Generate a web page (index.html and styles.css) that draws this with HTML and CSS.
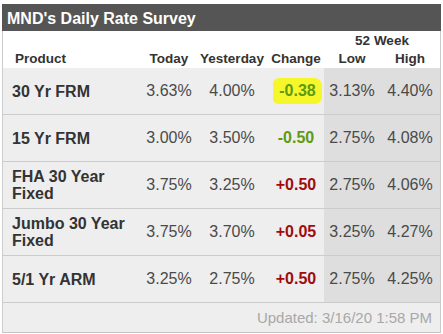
FILE: index.html
```html
<!DOCTYPE html>
<html>
<head>
<meta charset="utf-8">
<link rel="stylesheet" href="styles.css">
</head>
<body>
<div class="survey">
  <div class="title">MND's Daily Rate Survey</div>
  <table class="rates">
    <colgroup>
      <col class="c-prod"><col class="c-today"><col class="c-yest"><col class="c-chg"><col class="c-low"><col class="c-high">
    </colgroup>
    <thead>
      <tr class="h1"><th></th><th></th><th></th><th></th><th colspan="2">52 Week</th></tr>
      <tr class="h2"><th class="prod">Product</th><th>Today</th><th>Yesterday</th><th>Change</th><th>Low</th><th>High</th></tr>
    </thead>
    <tbody>
      <tr><td class="prod">30 Yr FRM</td><td>3.63%</td><td>4.00%</td><td class="chg"><span class="hl down">-0.38</span></td><td class="wk">3.13%</td><td class="wk">4.40%</td></tr>
      <tr><td class="prod">15 Yr FRM</td><td>3.00%</td><td>3.50%</td><td class="chg down">-0.50</td><td class="wk">2.75%</td><td class="wk">4.08%</td></tr>
      <tr><td class="prod">FHA 30 Year Fixed</td><td>3.75%</td><td>3.25%</td><td class="chg up">+0.50</td><td class="wk">2.75%</td><td class="wk">4.06%</td></tr>
      <tr><td class="prod">Jumbo 30 Year Fixed</td><td>3.75%</td><td>3.70%</td><td class="chg up">+0.05</td><td class="wk">3.25%</td><td class="wk">4.27%</td></tr>
      <tr><td class="prod">5/1 Yr ARM</td><td>3.25%</td><td>2.75%</td><td class="chg up">+0.50</td><td class="wk">2.75%</td><td class="wk">4.25%</td></tr>
      <tr class="foot"><td colspan="6">Updated: 3/16/20 1:58 PM</td></tr>
    </tbody>
  </table>
</div>
</body>
</html>
```
FILE: styles.css
```css
html, body {
  margin: 0;
  padding: 0;
  background: #ffffff;
}
body {
  font-family: "Liberation Sans", Arial, sans-serif;
}
.survey {
  margin: 4px 0 0 2px;
  width: 439px;
}
.title {
  background: #555555;
  color: #ffffff;
  font-weight: bold;
  font-size: 16px;
  height: 27px;
  box-sizing: border-box;
  padding: 3px 0 0 5px;
  line-height: 24px;
}
.rates {
  width: 439px;
  table-layout: fixed;
  border-collapse: separate;
  border-spacing: 0;
  border-left: 1px solid #cccccc;
  border-right: 1px solid #cccccc;
  border-bottom: 1px solid #c4c4c4;
}
.c-prod { width: 139px; }
.c-today { width: 54px; }
.c-yest { width: 72px; }
.c-chg { width: 56px; }
.c-low { width: 56px; }
.c-high { width: 60px; }
th {
  font-size: 13.5px;
  font-weight: bold;
  color: #333333;
  padding: 0;
  text-align: center;
}
.h1 th { height: 18px; }
.h2 th { height: 19px; }
th.prod { text-align: left; padding-left: 12px; }
td {
  height: 46px;
  padding: 0;
  border-bottom: 1px solid #cccccc;
  background: #eeeeee;
  text-align: center;
  font-size: 16px;
  color: #4a4a4a;
}
td.prod {
  text-align: left;
  padding: 0 6px 0 9px;
  font-weight: bold;
  color: #333333;
  line-height: 17px;
}
td.wk { background: #dedede; }
td.chg { font-weight: bold; }
.down { color: #5e9a12; }
.up { color: #a00c0c; }
.hl {
  display: inline-block;
  background: #f6f72a;
  border-radius: 6px 8px 7px 5px;
  padding: 4px 6px 4px 6px;
  line-height: 18px;
  margin-left: 3px;
}
.foot td {
  height: 29px;
  border-bottom: none;
  text-align: right;
  padding-right: 8px;
  font-size: 15px;
  color: #a8a8a8;
}
```
